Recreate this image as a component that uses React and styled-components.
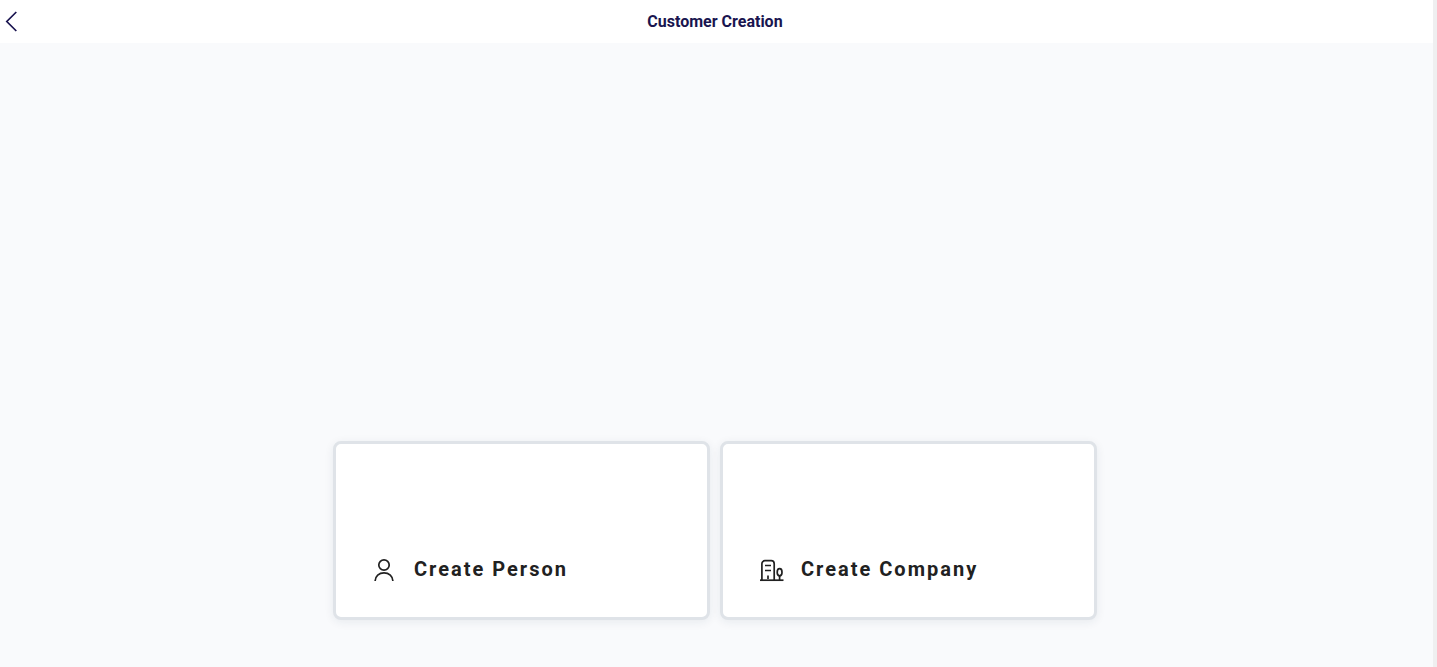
import styled, { createGlobalStyle } from 'styled-components'

export default function App() {
  return (
    <>
      <GlobalStyle />
      <Page>
        <Header>
          <BackButton aria-label="Back">
            <svg width="24" height="24" viewBox="0 0 24 24">
              <path d="M16.3 2 6.8 11.5l9.5 9.5" />
            </svg>
          </BackButton>
          <Title>Customer Creation</Title>
        </Header>
        <Main>
          <Options>
            <OptionCard>
              <PersonIcon />
              Create Person
            </OptionCard>
            <OptionCard>
              <CompanyIcon />
              Create Company
            </OptionCard>
          </Options>
        </Main>
      </Page>
    </>
  )
}

function PersonIcon() {
  return (
    <Icon viewBox="0 0 24 24" aria-hidden="true">
      <circle cx="12" cy="7" r="5.2" />
      <path d="M3.1 23c0-4.9 4-8.2 8.9-8.2s8.9 3.3 8.9 8.2" />
    </Icon>
  )
}

function CompanyIcon() {
  return (
    <Icon viewBox="0 0 24 24" aria-hidden="true">
      <path d="M1 22.2h23.5" />
      <path d="M2.900 22V5.700a3 3 0 0 1 3-3h6.300a3 3 0 0 1 3 3V22" />
      <path d="M6 7.500h6M6 12.500h6M9 17.500V21" />
      <ellipse cx="20.6" cy="14.3" rx="2.4" ry="3.6" />
      <path d="M20.6 17.900V22" />
    </Icon>
  )
}

const GlobalStyle = createGlobalStyle`
  * {
    box-sizing: border-box;
  }

  body {
    margin: 0;
    background: #f9fafc;
    font-family: Roboto, sans-serif;
  }
`

const Page = styled.div`
  display: flex;
  flex-direction: column;
  min-height: 100vh;
  border-right: 4px solid #efeff0;
`

const Header = styled.header`
  display: grid;
  grid-template-columns: 24px 1fr 24px;
  align-items: center;
  padding: 10px 3px 9px 0;
  background: #fff;
`

const BackButton = styled.button`
  display: flex;
  padding: 0;
  border: 0;
  background: none;
  cursor: pointer;

  svg {
    fill: none;
    stroke: #19134f;
    stroke-width: 1.7;
  }
`

const Title = styled.h1`
  margin: 0;
  color: #19154f;
  font-size: 16px;
  font-weight: 700;
  line-height: 24px;
  text-align: center;
`

const Main = styled.main`
  display: flex;
  flex: 1;
  align-items: flex-end;
  justify-content: center;
  padding: 47px 3px 47px 0;
`

const Options = styled.div`
  display: grid;
  grid-template-columns: 1fr 1fr;
  gap: 10px;
  width: 100%;
  max-width: 764px;
`

const OptionCard = styled.button`
  display: flex;
  align-items: flex-start;
  gap: 18px;
  padding: 114px 36px 35px;
  border: 3px solid #dfe3e8;
  border-radius: 8px;
  background: #fff;
  box-shadow: 0 2px 10px rgba(30, 50, 80, 0.08);
  color: #212121;
  font-family: inherit;
  font-size: 20px;
  font-weight: 700;
  line-height: 22px;
  letter-spacing: 2px;
  cursor: pointer;
`

const Icon = styled.svg`
  flex: none;
  width: 24px;
  height: 24px;
  overflow: visible;
  fill: none;
  stroke: #212121;
  stroke-width: 1.7;
`
